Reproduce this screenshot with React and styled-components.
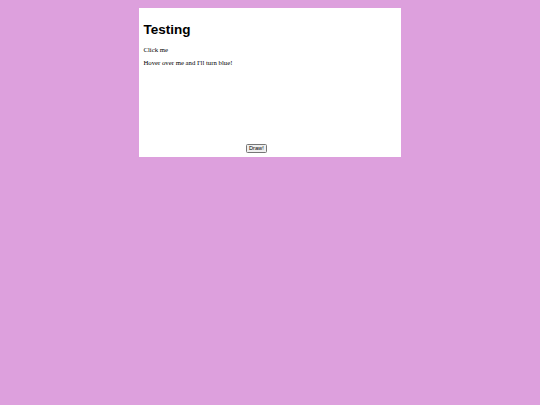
import styled, { createGlobalStyle } from "styled-components";

const GlobalStyle = createGlobalStyle`
  html {
    background: #dda0dd;
  }
  body {
    margin: 0;
    zoom: 0.421875;
    font-family: "Liberation Serif", "Times New Roman", serif;
    font-size: 16px;
    color: #000;
  }
`;

const Panel = styled.div`
  width: 600px;
  margin: 20px auto 0;
  padding: 10px;
  background: #fff;
`;

const Title = styled.h1`
  font-family: "Liberation Sans", Arial, sans-serif;
  font-size: 32px;
  font-weight: bold;
  margin: 21.44px 0;
`;

const Text = styled.p`
  margin: 16px 0;
  cursor: ${(p) => (p.$clickable ? "pointer" : "default")};
  &:hover {
    color: ${(p) => (p.$hoverBlue ? "blue" : "inherit")};
  }
`;

const DrawRow = styled.div`
  display: flex;
  align-items: flex-end;
`;

const Board = styled.div`
  width: 242px;
  height: 189px;
`;

const DrawButton = styled.button`
  font-family: "Liberation Sans", Arial, sans-serif;
  font-size: 13.33px;
  padding: 1px 6px;
  margin-bottom: 1px;
`;

const App = () => {
  return (
    <>
      <GlobalStyle />
      <Panel>
        <Title>Testing</Title>
        <Text $clickable>Click me</Text>
        <Text $hoverBlue>Hover over me and I'll turn blue!</Text>
        <DrawRow>
          <Board />
          <DrawButton>Draw!</DrawButton>
        </DrawRow>
      </Panel>
    </>
  );
};

export default App;
